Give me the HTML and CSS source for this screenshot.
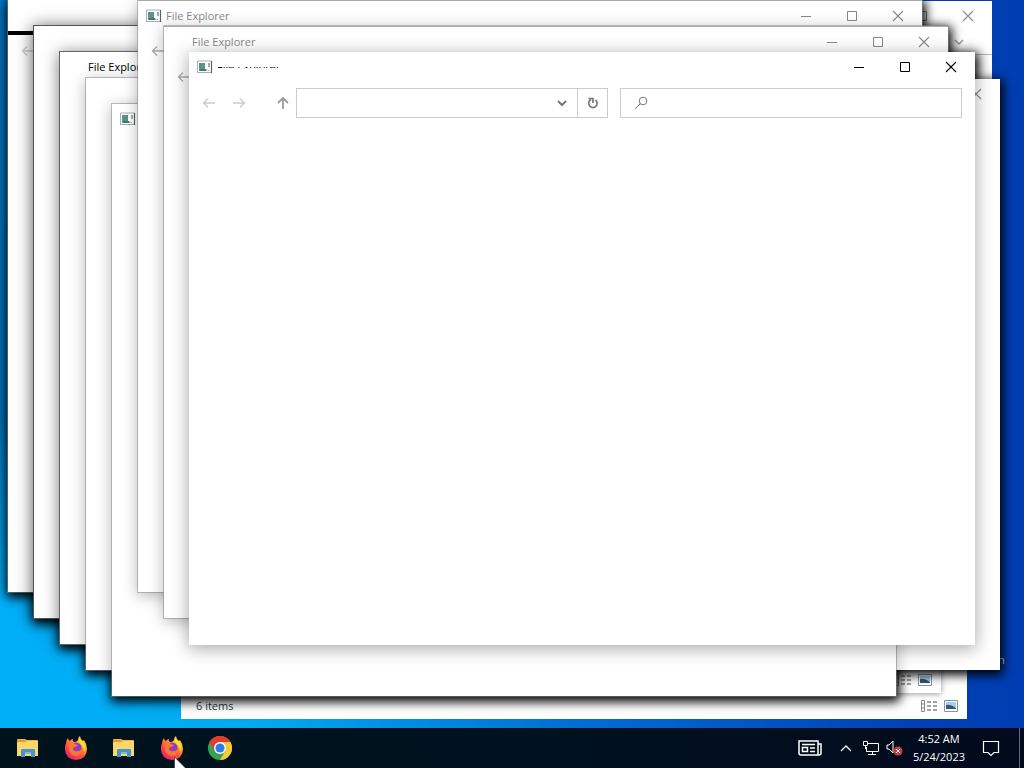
FILE: index.html
```html
<!DOCTYPE html>
<html lang="en">
<head>
<meta charset="utf-8">
<title>Desktop</title>
<link rel="stylesheet" href="styles.css">
</head>
<body>
<svg class="defs" width="0" height="0" aria-hidden="true">
  <symbol id="app" viewBox="0 0 16 14"><path d="M.5 1v12M.5 1h14M1 12.500h14" stroke="#a9b0b2" fill="none"/><path d="M14.500 1v12" stroke="#59646a" stroke-width="1.200"/><path d="M2 3h6v8H2z" fill="#5c9489"/><path d="M3 9h6v2H3z" fill="#3f7c73"/><path d="M9 9.500h1.500V11H9zM11 10h1v1h-1z" fill="#aaa"/><path d="M12 3v4" stroke="#555"/></symbol>
  <symbol id="left" viewBox="0 0 14 12"><path d="M13 6H1.500M6 1.500L1.500 6 6 10.500" fill="none" stroke="currentColor" stroke-width="1.300"/></symbol>
  <symbol id="min" viewBox="0 0 12 12"><path d="M1 6.500h10" stroke="currentColor"/></symbol>
  <symbol id="max" viewBox="0 0 12 12"><path d="M1.500 1.500h9v9h-9z" fill="none" stroke="currentColor"/></symbol>
  <symbol id="close" viewBox="0 0 12 12"><path d="M1 1l10 10M11 1L1 11" stroke="currentColor" stroke-width="1.100"/></symbol>
  <symbol id="down" viewBox="0 0 10 8"><path d="M1 2l4 4 4-4" fill="none" stroke="currentColor" stroke-width="2"/></symbol>
  <symbol id="thin-down" viewBox="0 0 10 8"><path d="M1 2l4 4 4-4" fill="none" stroke="currentColor" stroke-width="1.300"/></symbol>
  <symbol id="views" viewBox="0 0 40 14"><path d="M1.500 1.500h3v11h-3zM1.500 5h3M1.500 9h3" fill="none" stroke="#888"/><path d="M7 3h4M13 3h4M7 7h4M13 7h4M7 11h4M13 11h4" stroke="#444"/><path d="M24.500 1.500h13v11h-13z" fill="#fff" stroke="#7d96b5"/><path d="M26 3h10v5H26z" fill="#a9cdf0"/><path d="M26 6q4-1 10 3v1H26z" fill="#36566c"/></symbol>
  <symbol id="folder" viewBox="0 0 22 20"><path d="M0 2q0-1 1-1h7l2 1h10q1 0 1 1v15H0z" fill="#f4b43c"/><path d="M0 4h9l2-1h10v15H0z" fill="#fbd76b"/><path d="M0 2h8v2H0z" fill="#e59b1c"/><path d="M4 19v-7q0-1 1-1h12q1 0 1 1v7h-4v-4H8v4z" fill="#4694c8"/><path d="M8 14h6v2H8z" fill="#79bde0"/></symbol>
  <symbol id="firefox" viewBox="0 0 24 24"><defs><linearGradient id="fg" x1="1" y1="0" x2=".3" y2="1"><stop offset="0" stop-color="#fff14a"/><stop offset=".35" stop-color="#ffb52d"/><stop offset=".65" stop-color="#ff5038"/><stop offset="1" stop-color="#e8246d"/></linearGradient></defs><path d="M2 7q0-3 2-5 0 2 2 3 1-2 3-2-1 2 1 3 3 0 4-2 0-3 2-4 0 3 3 5l1-1q3 4 3 9 0 10-11 11Q1 23 1 13q0-4 1-6z" fill="url(#fg)"/><circle cx="12" cy="12" r="5.500" fill="#8b42bf"/><path d="M3 8q5-3 8 0l3 1q-1 2-4 2-1 4 4 4 4 0 4-5 3 5-1 8-5 4-10 0-3-3-2-6z" fill="#ff7536"/><path d="M9 12q0 4 5 3 3-1 3-5l-3-3q1 5-5 5z" fill="#8b42bf"/><path d="M16 2q1 3 4 6 2 4 0 8 0-6-4-9-2-2 0-5z" fill="#ffdf41"/></symbol>
</svg>
<main class="desktop">
  <span class="icon-label">n</span>

  <section class="window plain w-back-right">
    <header class="titlebar"><span class="title"></span><span class="controls"><svg><use href="#min"/></svg><svg><use href="#max"/></svg><svg><use href="#close"/></svg></span></header>
    <div class="ribbon"><svg><use href="#thin-down"/></svg></div>
  </section>
  <section class="window plain w-status"><footer class="status"><span>6 items</span><svg><use href="#views"/></svg></footer></section>
  <section class="window plain w-status-two"><footer class="status"><span></span><svg><use href="#views"/></svg></footer></section>

  <div class="shade w-a"></div><div class="shade w-b"></div><div class="shade w-c"></div><div class="shade w-d"></div><div class="shade w-e"></div><div class="shade w-f"></div><div class="shade w-g"></div><div class="shade w-h"></div><div class="shade w-right"></div>

  <section class="window plain w-right"><header class="titlebar"><span class="title"></span><span class="controls"><svg><use href="#close"/></svg></span></header></section>
  <section class="window w-a"><div class="bar"></div><nav class="tools"><svg class="arrow"><use href="#left"/></svg></nav></section>
  <section class="window deep w-b"></section>
  <section class="window mid w-c"><header class="titlebar active"><span class="title indent">File Explorer</span></header></section>
  <section class="window w-d"></section>
  <section class="window w-e"><header class="titlebar"><svg class="app"><use href="#app"/></svg></header></section>
  <section class="window w-f"><header class="titlebar"><svg class="app"><use href="#app"/></svg><span class="title">File Explorer</span><span class="controls"><svg><use href="#min"/></svg><svg><use href="#max"/></svg><svg><use href="#close"/></svg></span></header><nav class="tools"><svg class="arrow"><use href="#left"/></svg></nav></section>
  <section class="window w-g"><header class="titlebar"><span class="title indent">File Explorer</span><span class="controls"><svg><use href="#min"/></svg><svg><use href="#max"/></svg><svg><use href="#close"/></svg></span></header><nav class="tools"><svg class="arrow"><use href="#left"/></svg></nav></section>

  <section class="window front w-h">
    <header class="titlebar active"><svg class="app"><use href="#app"/></svg><span class="title cut">File Explorer</span>
      <span class="controls"><button aria-label="Minimize"><svg><use href="#min"/></svg></button><button aria-label="Maximize"><svg><use href="#max"/></svg></button><button aria-label="Close"><svg><use href="#close"/></svg></button></span></header>
    <nav class="tools">
      <button class="nav-btn" aria-label="Back"><svg class="arrow"><use href="#left"/></svg></button>
      <button class="nav-btn" aria-label="Forward"><svg class="arrow forward"><use href="#left"/></svg></button>
      <button class="nav-btn up" aria-label="Up"><svg viewBox="0 0 12 14"><path d="M6 13V2M1 7l5-5 5 5" fill="none" stroke="currentColor" stroke-width="1.800"/></svg></button>
      <div class="address"><input type="text" aria-label="Address"><button class="drop" aria-label="History"><svg><use href="#down"/></svg></button><button class="refresh" aria-label="Refresh"><svg viewBox="0 0 12 14"><path d="M8.500 4A4.200 4.200 0 1 1 4 3.600M1.500 2.500H6V7" fill="none" stroke="currentColor" stroke-width="1.700"/></svg></button></div>
      <div class="search"><svg viewBox="0 0 14 14"><circle cx="9" cy="5" r="3.800" fill="none" stroke="currentColor"/><path d="M6.500 7.500L1 13" stroke="currentColor"/></svg><input type="text" aria-label="Search"></div>
    </nav>
  </section>

  <footer class="taskbar">
    <div class="apps">
      <button aria-label="File Explorer"><svg><use href="#folder"/></svg></button>
      <button aria-label="Firefox"><svg><use href="#firefox"/></svg></button>
      <button aria-label="File Explorer"><svg><use href="#folder"/></svg></button>
      <button aria-label="Firefox"><svg><use href="#firefox"/></svg></button>
      <button aria-label="Chrome"><svg viewBox="0 0 24 24"><circle cx="12" cy="12" r="12" fill="#34a353"/><path d="M1.600 6A12 12 0 0 1 22.400 6L12 12 6.800 15z" fill="#e33b2e"/><path d="M22.400 6A12 12 0 0 1 12 24l5.200-9L12 6z" fill="#fcc934"/><path d="M1.600 6L6.800 15 12 6h10.400A12 12 0 0 0 1.600 6z" fill="#e33b2e"/><circle cx="12" cy="12" r="6" fill="#fff"/><circle cx="12" cy="12" r="4.600" fill="#287de6"/></svg></button>
    </div>
    <div class="tray">
      <svg class="news" viewBox="0 0 24 16"><path d="M1 1h19v14H3q-2 0-2-2zM20 4h3v9q0 2-2 2h-2" fill="none" stroke="#fff" stroke-width="1.500"/><path d="M4 4.500h13M12 8h5M12 11.500h5M4.500 7.500h5v4h-5z" fill="none" stroke="#fff" stroke-width="1.500"/></svg>
      <svg class="caret" viewBox="0 0 12 8"><path d="M1 7l5-5 5 5" fill="none" stroke="#fff" stroke-width="1.300"/></svg>
      <svg class="net" viewBox="0 0 18 14"><path d="M5 2.500h11.500v8H4.500V6M10.500 10.500v3M6 13.500h8M1.500.5h4v4h-4zM3.500 5v3" fill="none" stroke="#fff"/></svg>
      <svg class="sound" viewBox="0 0 17 16"><path d="M1 5h2l4-4v12L3 9H1z" fill="none" stroke="#fff"/><circle cx="12" cy="11" r="4.500" fill="#c93e43"/><path d="M10 9l4 4M14 9l-4 4" stroke="#fff"/></svg>
      <div class="clock"><time>4:52 AM</time><span>5/24/2023</span></div>
      <svg class="note" viewBox="0 0 18 17"><path d="M1.500 1.500h15v11H12l-3 3-3-3H1.500z" fill="none" stroke="#fff" stroke-width="1.200"/></svg>
      <span class="peek"></span>
    </div>
  </footer>
  <svg class="cursor" viewBox="0 0 12 19"><path d="M.5 0v17l4-4 3 6 2-1-3-6h6z" fill="#fff" stroke="#222" stroke-width=".6"/></svg>
</main>
</body>
</html>
```
FILE: styles.css
```css
* { box-sizing: border-box; }
body { margin: 0; font: 11px/16px "Open Sans", "Noto Sans", sans-serif; }
button { padding: 0; border: 0; background: none; color: inherit; display: flex; align-items: center; justify-content: center; }
input { border: 0; padding: 0; background: none; min-width: 0; flex: 1; outline: 0; }
svg { display: block; flex-shrink: 0; }
.defs { position: absolute; }
.desktop { position: relative; height: 100vh; overflow: hidden; display: flex; flex-direction: column; justify-content: flex-end;
  background: linear-gradient(90deg, #00aff8 0, #00aaf2 25%, #0070d4 55%, #0040b5 90%, #003db2 100%); }
.desktop::before { content: ""; position: absolute; left: 0; top: 0; width: 8px; height: 600px; background: linear-gradient(#0078c8, #0078c0 70%, #00adf5); }
.icon-label { position: absolute; left: 998px; top: 652px; color: #fff; }

.window, .shade { position: absolute; width: 784px; height: 592px; }
.window { background: #fff; box-shadow: 0 0 0 1px #8888, 0 3px 14px 1px #0004; display: flex; flex-direction: column; }
.window.plain { box-shadow: none; }
.window.deep { box-shadow: 0 0 0 1px #555, 0 2px 16px 1px #000a; }
.window.mid { box-shadow: 0 0 0 1px #666, 0 2px 15px 1px #0008; }
.window.front { box-shadow: 0 3px 16px 1px #0005; }
.shade { box-shadow: 1px 3px 10px 2px #000; }
.w-a { left: 8px; top: 0; }
.w-b { left: 34px; top: 26px; }
.w-c { left: 60px; top: 52px; }
.w-d { left: 86px; top: 78px; }
.w-e { left: 112px; top: 104px; }
.w-f { left: 138px; top: 0; }
.w-g { left: 164px; top: 26px; }
.w-h { left: 189px; top: 52px; width: 786px; height: 593px; }
.w-right { left: 216px; top: 79px; height: 591px; }
.w-back-right { left: 208px; top: 1px; }
.w-status { left: 181px; top: 127px; width: 786px; }
.window.w-status-two { left: 155px; top: 101px; width: 786px; box-shadow: 0 1px 6px #0006; }

.titlebar { height: 30px; padding-left: 8px; display: flex; align-items: center; color: #888; }
.titlebar.active { color: #000; }
.app { width: 16px; height: 14px; margin-right: 4px; }
.title.indent { padding-left: 20px; }
.title.cut { clip-path: inset(8px 0 7px 0); }
.controls { margin-left: auto; display: flex; gap: 34px; padding-right: 18px; }
.controls svg { width: 12px; height: 12px; }
.w-f, .w-g { border-top: 1px solid #aaa; }
.w-f .titlebar, .w-g .titlebar { height: 29px; }
.ribbon { height: 24px; padding: 7px 28px; border-bottom: 1px solid #bbb; display: flex; justify-content: flex-end; color: #999; }
.ribbon svg { width: 10px; height: 8px; }
.bar { height: 4px; margin-top: 31px; background: #000; }
.tools { height: 42px; padding: 0 13px; display: flex; align-items: center; color: #ccc; }
.w-f .tools, .w-g .tools { color: #aaa; }
.w-a .tools { height: 32px; }
.arrow { width: 14px; height: 12px; }
.arrow.forward { transform: scaleX(-1); }
.nav-btn { width: 14px; margin-right: 16px; }
.nav-btn.up { color: #999; margin-left: 14px; margin-right: 6px; }
.up svg { width: 12px; height: 14px; }
.address { flex: 312 1 0; height: 30px; border: 1px solid #ccc; display: flex; }
.drop { width: 30px; color: #777; }
.drop svg { width: 10px; height: 8px; }
.refresh { width: 30px; border-left: 1px solid #ccc; color: #777; }
.refresh svg { width: 12px; height: 14px; }
.search { flex: 342 1 0; height: 30px; margin-left: 12px; border: 1px solid #ccc; display: flex; align-items: center; color: #777; }
.search svg { width: 14px; height: 14px; margin-left: 13px; }
.status { margin-top: auto; height: 26px; padding: 0 7px 0 15px; display: flex; align-items: center; justify-content: space-between; color: #26364f; }
.status svg { width: 40px; height: 14px; }

.taskbar { position: relative; height: 40px; background: linear-gradient(90deg, #00131d, #00121f 50%, #020a1d); color: #fff; display: flex; justify-content: space-between; }
.apps { display: flex; align-items: center; padding-left: 4px; }
.apps button { width: 48px; height: 40px; }
.apps svg { width: 24px; height: 24px; }
.apps button:nth-child(odd) svg { height: 20px; }
.apps button:last-child svg { height: 24px; }
.tray { display: flex; align-items: center; }
.news { width: 24px; height: 16px; margin-right: 18px; }
.caret { width: 12px; height: 8px; margin-right: 10px; }
.net { width: 18px; height: 14px; margin-right: 6px; }
.sound { width: 17px; height: 16px; margin-right: 10px; }
.clock { display: flex; flex-direction: column; align-items: center; line-height: 18px; }
.note { width: 18px; height: 17px; margin: 0 19px 0 17px; }
.peek { width: 5px; height: 40px; border-left: 1px solid #667; }
.cursor { position: absolute; left: 174px; top: 757px; width: 12px; height: 19px; }
```
